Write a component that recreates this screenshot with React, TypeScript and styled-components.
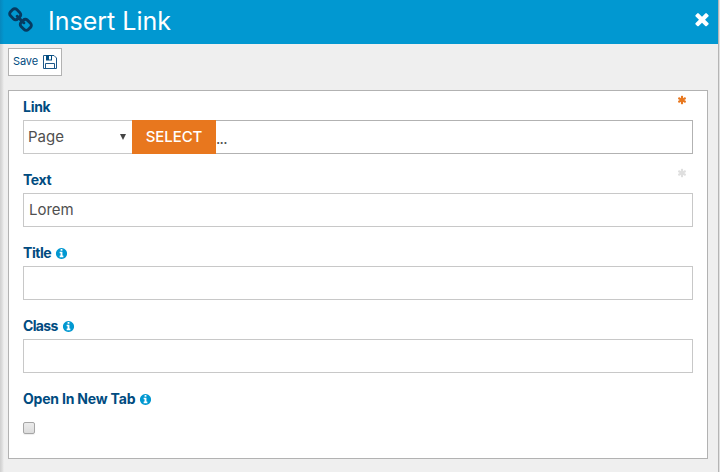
import React from "react";
import styled, { createGlobalStyle } from "styled-components";

const Global = createGlobalStyle`
  *, *::before, *::after { box-sizing: border-box; }
  body { margin: 0; background: #efefef; font-family: Inter, "Open Sans", sans-serif; }
`;

const Dialog = styled.div`
  width: 720px;
  height: 472px;
  overflow: hidden;
  display: flex;
  flex-direction: column;
  border-right: 1px solid #e1e1e1;
  background: linear-gradient(to right, #cfcfcf 0, #dcdcdc 2px, #efefef 4px);
`;

const Header = styled.header`
  height: 44px;
  flex: none;
  display: flex;
  align-items: center;
  padding: 0 6px 4px 7px;
  border-right: 1px solid #b5b5b5;
  color: #fff;
  background: linear-gradient(to right, #0787bd 0, #0198d1 4px);
`;

const Heading = styled.h1`
  margin: 1px auto 0 14px;
  font-size: 25px;
  font-weight: 400;
  line-height: 40px;
  letter-spacing: 0;
`;

const IconButton = styled.button`
  display: flex;
  margin-top: -3px;
  padding: 0;
  border: 0;
  background: none;
  color: #fff;
`;

const Content = styled.main`
  flex: 1;
  padding: 4px 10px 13px 8px;
  border-right: 1px solid #b5b5b5;
`;

const SaveButton = styled.button`
  display: flex;
  align-items: center;
  justify-content: space-between;
  width: 54px;
  height: 28px;
  padding: 0 4px;
  border: 1px solid #b2b2b2;
  background: #fff;
  color: #004b80;
  font: 400 11px/14px Inter, sans-serif;
`;

const SaveText = styled.span`
  margin-top: -2px;
  letter-spacing: -0.1px;
`;

const Form = styled.form`
  height: 369px;
  margin-top: 14px;
  padding: 8px 14px 0;
  border: 1px solid #b2b2b2;
  background: #fff;
`;

const Field = styled.div`
  height: 73px;
`;

const LabelRow = styled.div`
  height: 21px;
  display: flex;
  align-items: flex-start;
  padding-right: 6px;
`;

const Label = styled.label<{ $tracking?: number }>`
  margin: -1px 4px 0 0;
  color: #004b80;
  font-size: 14px;
  font-weight: 650;
  line-height: 17px;
  letter-spacing: ${(p) => p.$tracking ?? -0.27}px;
`;

const Info = styled.span`
  display: flex;
  margin-top: 2px;
  color: #0198d1;
`;

const Required = styled.span<{ $active?: boolean }>`
  display: flex;
  margin: -4px 0 0 auto;
  color: ${(p) => (p.$active ? "#e8771e" : "#dfdfdf")};
`;

const Input = styled.input`
  display: block;
  width: 100%;
  height: 34px;
  padding: 0 5px 1px;
  border: 1px solid #c8c8c8;
  border-radius: 0;
  outline: 0;
  background: #fff;
  color: #505050;
  font: 400 15px Inter, sans-serif;
`;

const LinkRow = styled.div`
  display: flex;
  height: 34px;
  color: #505050;
  font-size: 15px;
`;

const TypeSelect = styled.div`
  width: 109px;
  display: flex;
  align-items: center;
  justify-content: space-between;
  padding: 0 6px 1px 4px;
  border: 1px solid #c8c8c8;
  border-right: 0;
`;

const SelectButton = styled.button`
  width: 84px;
  border: 0;
  padding: 0 0 1px;
  background: #e8771e;
  color: #fff;
  font: 500 15px Inter, sans-serif;
  letter-spacing: -0.1px;
`;

const Target = styled.div`
  flex: 1;
  border: 1px solid #b2b2b2;
  border-left: 0;
  line-height: 35px;
  letter-spacing: -0.7px;
`;

const Check = styled.input`
  appearance: none;
  display: block;
  width: 12px;
  height: 12px;
  margin: 10px 0 0;
  border: 1px solid #a6a6a6;
  border-radius: 2px;
  background: linear-gradient(#ececec, #dcdcdc);
  box-shadow: 0 1px 1px #eeeeee;
`;

const paths = {
  chain:
    "M1520 1216q0-40-28-68l-208-208q-28-28-68-28-42 0-72 32 3 3 19 18.5t21.5 21.5 15 19 13 25.5 3.5 27.5q0 40-28 68t-68 28q-15 0-27.5-3.5t-25.5-13-19-15-21.5-21.5-18.5-19q-33 31-33 73 0 40 28 68l206 207q27 27 68 27 40 0 68-26l147-146q28-28 28-67zm-703-705q0-40-28-68l-206-207q-28-28-68-28-39 0-68 27l-147 146q-28 28-28 67 0 40 28 68l208 208q27 27 68 27 42 0 72-31-3-3-19-18.5t-21.5-21.5-15-19-13-25.5-3.5-27.5q0-40 28-68t68-28q15 0 27.5 3.5t25.5 13 19 15 21.5 21.5 18.5 19q33-31 33-73zm895 705q0 120-85 203l-147 146q-83 83-203 83-121 0-204-85l-206-207q-83-83-83-203 0-123 88-209l-88-88q-86 88-208 88-120 0-204-84l-208-208q-84-84-84-204t85-203l147-146q83-83 203-83 121 0 204 85l206 207q83 83 83 203 0 123-88 209l88 88q86-88 208-88 120 0 204 84l208 208q84 84 84 204z",
  times:
    "M1490 1322q0 40-28 68l-136 136q-28 28-68 28t-68-28l-294-294-294 294q-28 28-68 28t-68-28l-136-136q-28-28-28-68t28-68l294-294-294-294q-28-28-28-68t28-68l136-136q28-28 68-28t68 28l294 294 294-294q28-28 68-28t68 28l136 136q28 28 28 68t-28 68l-294 294 294 294q28 28 28 68z",
  info: "M1152 1376v-160q0-14-9-23t-23-9h-96v-512q0-14-9-23t-23-9h-320q-14 0-23 9t-9 23v160q0 14 9 23t23 9h96v320h-96q-14 0-23 9t-9 23v160q0 14 9 23t23 9h448q14 0 23-9t9-23zm-128-896v-160q0-14-9-23t-23-9h-192q-14 0-23 9t-9 23v160q0 14 9 23t23 9h192q14 0 23-9t9-23zm640 416q0 209-103 385.5t-279.5 279.5-385.5 103-385.5-103-279.5-279.5-103-385.5 103-385.5 279.5-279.5 385.5-103 385.5 103 279.5 279.5 103 385.5z",
  asterisk:
    "M1546 1050q46 26 59.5 77.5t-12.5 97.5l-64 110q-26 46-77.5 59.5t-97.5-12.5l-266-153v307q0 52-38 90t-90 38h-128q-52 0-90-38t-38-90v-307l-266 153q-46 26-97.5 12.5t-77.5-59.5l-64-110q-26-46-12.5-97.5t59.5-77.5l266-154-266-154q-46-26-59.5-77.5t12.5-97.5l64-110q26-46 77.5-59.5t97.5 12.5l266 153v-307q0-52 38-90t90-38h128q52 0 90 38t38 90v307l266-153q46-26 97.5-12.5t77.5 59.5l64 110q26 46 12.5 97.5t-59.5 77.5l-266 154z",
};

function Icon({ name, size, color = "currentColor" }: { name: keyof typeof paths; size: number; color?: string }) {
  return (
    <svg width={size} height={size} viewBox="0 0 1792 1792" fill={color} aria-hidden="true">
      <path d={paths[name]} />
    </svg>
  );
}

function Floppy() {
  return (
    <svg width="14" height="14" viewBox="0 0 14 14" fill="none" stroke="#1c588a" aria-hidden="true">
      <path d="M.5.5H11L13.5 3V13.5H.5Z" />
      <path d="M3 0h6v5.5H3Z" fill="#004b80" stroke="none" />
      <path d="M6 1h2v3.5H6Z" fill="#fff" stroke="none" />
      <path d="M2.5 13.5v-5h9v5" />
    </svg>
  );
}

function InfoMark() {
  return (
    <Info>
      <Icon name="info" size={13} />
    </Info>
  );
}

export default function App() {
  return (
    <>
      <Global />
      <Dialog>
        <Header>
          <Icon name="chain" size={27} color="#063a61" />
          <Heading>Insert Link</Heading>
          <IconButton aria-label="Close">
            <Icon name="times" size={20} />
          </IconButton>
        </Header>
        <Content>
          <SaveButton>
            <SaveText>Save</SaveText>
            <Floppy />
          </SaveButton>
          <Form>
            <Field>
              <LabelRow>
                <Label>Link</Label>
                <Required $active>
                  <Icon name="asterisk" size={10} />
                </Required>
              </LabelRow>
              <LinkRow>
                <TypeSelect>
                  <span>Page</span>
                  <svg width="6" height="6" viewBox="0 0 6 6">
                    <path d="M0 0H6L3 6Z" fill="#444" />
                  </svg>
                </TypeSelect>
                <SelectButton type="button">SELECT</SelectButton>
                <Target>...</Target>
              </LinkRow>
            </Field>
            <Field>
              <LabelRow>
                <Label $tracking={-0.4}>Text</Label>
                <Required>
                  <Icon name="asterisk" size={10} />
                </Required>
              </LabelRow>
              <Input defaultValue="Lorem" />
            </Field>
            <Field>
              <LabelRow>
                <Label $tracking={-0.45}>Title</Label>
                <InfoMark />
              </LabelRow>
              <Input />
            </Field>
            <Field>
              <LabelRow>
                <Label $tracking={-0.65}>Class</Label>
                <InfoMark />
              </LabelRow>
              <Input />
            </Field>
            <Field>
              <LabelRow>
                <Label $tracking={-0.2}>Open In New Tab</Label>
                <InfoMark />
              </LabelRow>
              <Check type="checkbox" />
            </Field>
          </Form>
        </Content>
      </Dialog>
    </>
  );
}
